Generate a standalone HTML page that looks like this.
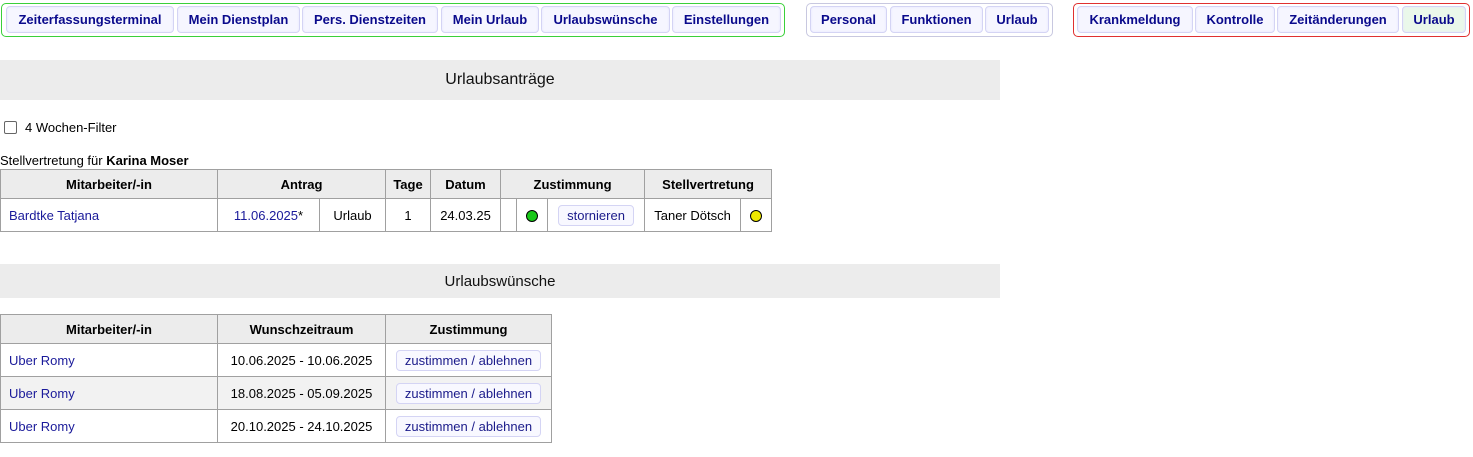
<!DOCTYPE html>
<html><head><meta charset="utf-8"><style>
body{margin:0;width:1473px;height:457px;background:#fff;font-family:"Liberation Sans",Arial,sans-serif;font-size:13px;color:#000;position:relative;overflow:hidden}
.grp{position:absolute;top:3px;height:34px;border:1px solid;border-radius:5px;box-sizing:border-box}
.b{position:absolute;top:6px;height:27px;box-sizing:border-box;border:1px solid #d4d4f4;border-radius:4px;background:#f6f6ff;color:#0a0a8c;font-weight:bold;font-size:13px;display:flex;align-items:center;justify-content:center;box-shadow:inset 0 0 2px #e6e6ff}
.bar{position:absolute;left:0;width:1000px;background:#ececec;display:flex;align-items:center;justify-content:center;font-size:16px;color:#111}
table{position:absolute;left:0;border-collapse:collapse;table-layout:fixed}
td,th{border:1px solid #a0a0a0;padding:0;text-align:center;font-size:13px}
th{background:#ececec;font-weight:bold;height:28px}
td{height:32px}
a{color:#1a1a9a;text-decoration:none}
.l{text-align:left;padding-left:8px}
.btn{display:inline-block;border:1px solid #d4d4f4;border-radius:4px;background:#f8f8ff;color:#1a1a8a;padding:2px 8px;font-size:13px}
.dot{display:inline-block;width:10px;height:10px;border-radius:50%;border:1px solid #000;vertical-align:middle}
</style></head><body>
<div class="grp" style="left:1px;width:784px;border-color:#3ad03a"></div>
<div class="b" style="left:6px;width:168px">Zeiterfassungsterminal</div>
<div class="b" style="left:177px;width:123px">Mein Dienstplan</div>
<div class="b" style="left:302px;width:136px">Pers. Dienstzeiten</div>
<div class="b" style="left:441px;width:98px">Mein Urlaub</div>
<div class="b" style="left:541px;width:129px">Urlaubswünsche</div>
<div class="b" style="left:672px;width:109px">Einstellungen</div>

<div class="grp" style="left:806px;width:247px;border-color:#c8c8e0"></div>
<div class="b" style="left:810px;width:77px">Personal</div>
<div class="b" style="left:890px;width:93px">Funktionen</div>
<div class="b" style="left:985px;width:64px">Urlaub</div>

<div class="grp" style="left:1073px;width:397px;border-color:#e03030"></div>
<div class="b" style="left:1077px;width:116px">Krankmeldung</div>
<div class="b" style="left:1195px;width:80px">Kontrolle</div>
<div class="b" style="left:1277px;width:122px">Zeitänderungen</div>
<div class="b" style="left:1402px;width:64px;background:#eaf8ea">Urlaub</div>

<div class="bar" style="top:60px;height:40px">Urlaubsanträge</div>

<div style="position:absolute;left:4px;top:120px;display:flex;align-items:center"><span style="display:inline-block;width:11px;height:11px;border:1px solid #666;border-radius:2px;margin-right:8px"></span>4 Wochen-Filter</div>

<div style="position:absolute;left:0;top:153px">Stellvertretung für <b>Karina Moser</b></div>

<table style="top:169px;width:771px">
<colgroup><col style="width:217px"><col style="width:102px"><col style="width:66px"><col style="width:45px"><col style="width:70px"><col style="width:16px"><col style="width:31px"><col style="width:97px"><col style="width:96px"><col style="width:31px"></colgroup>
<tr><th>Mitarbeiter/-in</th><th colspan="2">Antrag</th><th>Tage</th><th>Datum</th><th colspan="3">Zustimmung</th><th colspan="2">Stellvertretung</th></tr>
<tr><td class="l"><a>Bardtke Tatjana</a></td><td><a>11.06.2025</a>*</td><td>Urlaub</td><td>1</td><td>24.03.25</td><td></td><td><span class="dot" style="background:#18c818"></span></td><td><span class="btn">stornieren</span></td><td>Taner Dötsch</td><td><span class="dot" style="background:#f0e800"></span></td></tr>
</table>

<div class="bar" style="top:264px;height:34px;font-size:15px">Urlaubswünsche</div>

<table style="top:314px;width:551px">
<colgroup><col style="width:217px"><col style="width:168px"><col style="width:166px"></colgroup>
<tr><th>Mitarbeiter/-in</th><th>Wunschzeitraum</th><th>Zustimmung</th></tr>
<tr><td class="l"><a>Uber Romy</a></td><td>10.06.2025 - 10.06.2025</td><td><span class="btn">zustimmen / ablehnen</span></td></tr>
<tr style="background:#f2f2f2"><td class="l"><a>Uber Romy</a></td><td>18.08.2025 - 05.09.2025</td><td><span class="btn">zustimmen / ablehnen</span></td></tr>
<tr><td class="l"><a>Uber Romy</a></td><td>20.10.2025 - 24.10.2025</td><td><span class="btn">zustimmen / ablehnen</span></td></tr>
</table>
</body></html>
